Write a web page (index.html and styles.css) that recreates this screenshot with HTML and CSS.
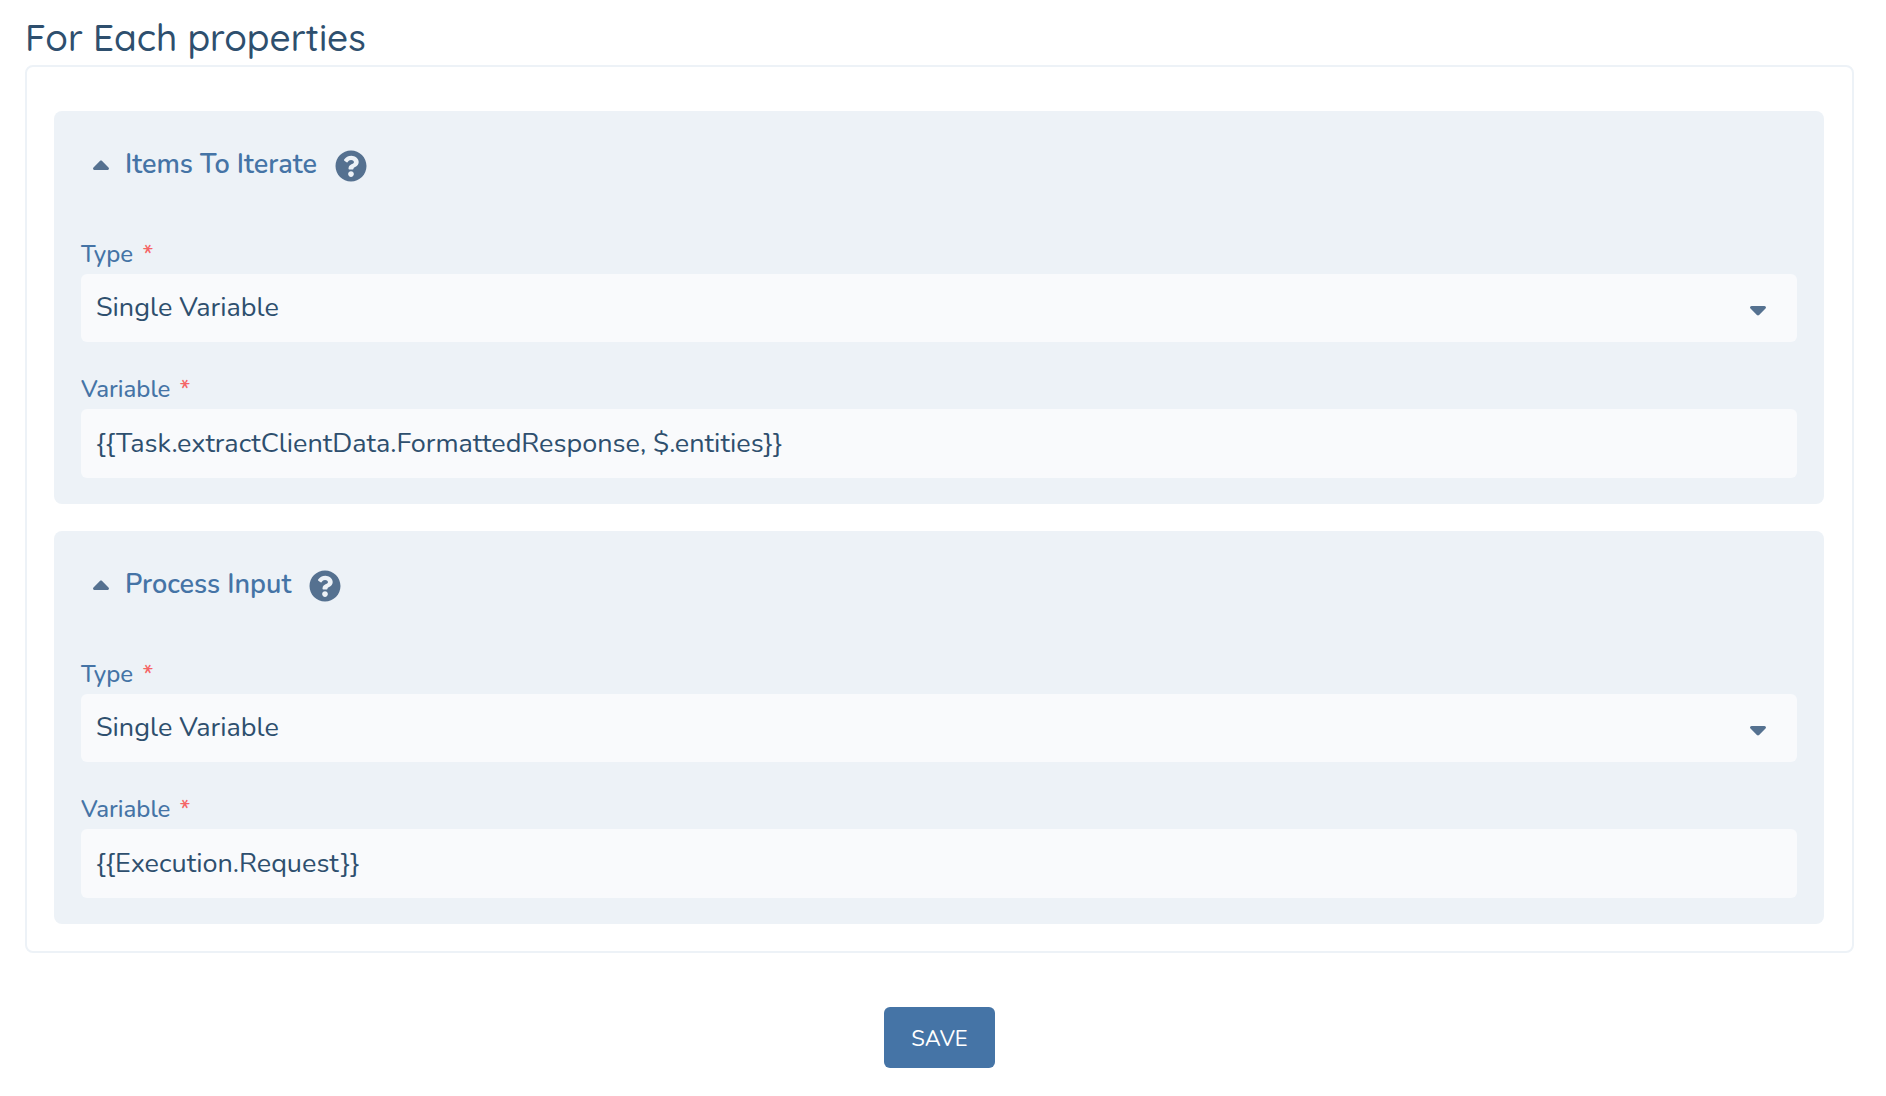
FILE: index.html
```html
<!DOCTYPE html>
<html lang="en">
<head>
<meta charset="utf-8">
<meta name="viewport" content="width=device-width, initial-scale=1">
<title>For Each properties</title>
<link rel="stylesheet" href="styles.css">
</head>
<body>
<svg class="sprite" aria-hidden="true">
  <symbol id="caret" viewBox="0 0 16 10">
    <path d="M1.6 10h12.8c1.4 0 2.1-1.6 1.1-2.6L9.1.9C8.500.3 7.500.3 6.900.9L.5 7.400C-.5 8.400.2 10 1.600 10z"/>
  </symbol>
  <symbol id="help" viewBox="0 0 512 512">
    <path d="M504 256c0 137-111 248-248 248S8 393 8 256C8 119.100 119 8 256 8s248 111.100 248 248zM262.700 90c-54.500 0-89.300 23-116.500 63.800-3.500 5.300-2.400 12.400 2.700 16.300l34.700 26.300c5.200 3.900 12.600 3 16.700-2.100 17.900-22.700 30.100-35.800 57.300-35.800 20.400 0 45.700 13.100 45.700 33 0 15-12.400 22.700-32.500 34C247.100 238.500 216 254.900 216 296v4c0 6.600 5.400 12 12 12h56c6.600 0 12-5.400 12-12v-1.300c0-28.500 83.200-29.600 83.200-106.700 0-58-60.200-102-116.500-102zM256 338c-25.400 0-46 20.600-46 46s20.600 46 46 46 46-20.600 46-46-20.600-46-46-46z"/>
  </symbol>
</svg>
<main class="page">
  <h1 class="title">For Each properties</h1>
  <form class="form">
    <div class="properties">
      <section class="panel">
        <header class="panel-header">
          <button class="toggle" type="button" aria-expanded="true">
            <svg class="caret" aria-hidden="true"><use href="#caret"/></svg>
            <span>Items To Iterate</span>
          </button>
          <button class="help" type="button" aria-label="Help"><svg class="help-icon" aria-hidden="true"><use href="#help"/></svg></button>
        </header>
        <div class="field">
          <label class="label" for="items-type">Type <span class="required">*</span></label>
          <div class="select-wrap">
            <select class="control control-select" id="items-type"><option>Single Variable</option></select>
            <svg class="caret select-caret" aria-hidden="true"><use href="#caret"/></svg>
          </div>
        </div>
        <div class="field">
          <label class="label" for="items-variable">Variable <span class="required">*</span></label>
          <input class="control" id="items-variable" type="text" value="{{Task.extractClientData.FormattedResponse, $.entities}}">
        </div>
      </section>
      <section class="panel">
        <header class="panel-header">
          <button class="toggle" type="button" aria-expanded="true">
            <svg class="caret" aria-hidden="true"><use href="#caret"/></svg>
            <span>Process Input</span>
          </button>
          <button class="help" type="button" aria-label="Help"><svg class="help-icon" aria-hidden="true"><use href="#help"/></svg></button>
        </header>
        <div class="field">
          <label class="label" for="input-type">Type <span class="required">*</span></label>
          <div class="select-wrap">
            <select class="control control-select" id="input-type"><option>Single Variable</option></select>
            <svg class="caret select-caret" aria-hidden="true"><use href="#caret"/></svg>
          </div>
        </div>
        <div class="field">
          <label class="label" for="input-variable">Variable <span class="required">*</span></label>
          <input class="control" id="input-variable" type="text" value="{{Execution.Request}}">
        </div>
      </section>
    </div>
    <button class="save" type="submit">SAVE</button>
  </form>
</main>
</body>
</html>
```
FILE: styles.css
```css
* { box-sizing: border-box; }

body {
  margin: 0;
  background: #fff;
  color: #2e4f6e;
  font-family: Nunito, "Open Sans", sans-serif;
}

button, input, select { font: inherit; color: inherit; }

button {
  border: 0;
  padding: 0;
  background: none;
  cursor: pointer;
}

.sprite { display: none; }

.page { padding: 13px 32px 24px 25px; }

.title {
  margin: 0 0 4px;
  font: 500 37px/48px Quicksand, Nunito, sans-serif;
}

.form {
  display: flex;
  flex-direction: column;
  align-items: center;
  gap: 54px;
}

.properties {
  display: flex;
  flex-direction: column;
  gap: 27px;
  width: 100%;
  padding: 44px 28px 27px 27px;
  border: 2px solid #edf2f7;
  border-radius: 8px;
}

.panel {
  display: flex;
  flex-direction: column;
  gap: 29px;
  padding: 27px 27px 26px;
  border-radius: 8px;
  background: #edf2f7;
}

.panel-header {
  display: flex;
  align-items: center;
  gap: 18px;
  height: 56px;
  margin-bottom: 13px;
  padding-left: 12px;
}

.toggle {
  display: flex;
  align-items: center;
  gap: 16px;
  padding-bottom: 2px;
  color: #4574a6;
  font-size: 27px;
  font-weight: 600;
  line-height: 36px;
}

.caret {
  width: 16px;
  height: 10px;
  fill: #557190;
}

.help { display: flex; }

.help-icon {
  width: 32px;
  height: 32px;
  fill: #557190;
}

.field {
  display: flex;
  flex-direction: column;
}

.label {
  margin-bottom: 2px;
  color: #4574a6;
  font-size: 24px;
  font-weight: 500;
  line-height: 36px;
}

.required {
  margin-left: 3px;
  color: #f56565;
}

.select-wrap { position: relative; }

.control {
  display: block;
  width: 100%;
  height: 69px;
  padding: 0 15px;
  border: 0;
  border-radius: 6px;
  background: #f9fafc;
  font-size: 27px;
  appearance: none;
}

.control-select {
  height: 68px;
  padding-bottom: 2px;
}

.select-caret {
  position: absolute;
  top: 32px;
  right: 31px;
  transform: rotate(180deg);
  pointer-events: none;
}

.save {
  padding: 4px 27px 0;
  border-radius: 6px;
  background: #4574a6;
  color: #fff;
  font-size: 22px;
  line-height: 57px;
}
```
